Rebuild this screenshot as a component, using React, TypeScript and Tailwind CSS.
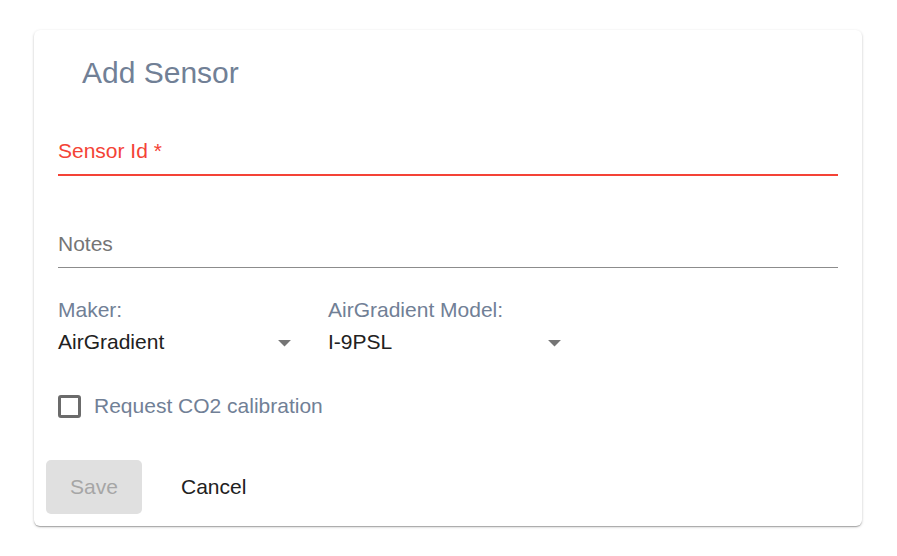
import { useState } from 'react'

function Caret() {
  return (
    <svg width="31" height="31" viewBox="0 0 24 24" className="text-[#757575]">
      <path d="M7 10l5 5 5-5z" fill="currentColor" />
    </svg>
  )
}

function SelectField({ label, value }: { label: string; value: string }) {
  return (
    <div className="w-[240px] mr-[30px]">
      <div className="text-[#718096] leading-[24px] mb-[8px]">{label}</div>
      <div className="flex items-center justify-between h-[24px]">
        <span className="text-[#212121]">{value}</span>
        <span className="mr-[-2px] flex items-center">
          <Caret />
        </span>
      </div>
    </div>
  )
}

export default function App() {
  const [checked, setChecked] = useState(false)

  return (
    <div className="min-h-[556px] bg-white pl-[34px] pt-[30px] font-['Liberation_Sans',Arial,sans-serif] text-[21px]">
      <div className="w-[828px] bg-white rounded-md shadow-[0_1px_3px_rgba(0,0,0,0.2),0_1px_1px_rgba(0,0,0,0.14),0_2px_1px_-1px_rgba(0,0,0,0.12)]">
        {/* Header */}
        <div className="pl-[48px] pt-[25px]">
          <h2 className="text-[30px] leading-[36px] text-[#718096]">Add Sensor</h2>
        </div>

        <div className="px-[24px]">
          {/* Sensor Id */}
          <div className="mt-[44px] h-[41px] border-b-2 border-[#f44336]">
            <span className="leading-[24px] text-[#f44336]">Sensor Id *</span>
          </div>

          {/* Notes */}
          <div className="mt-[52px] h-[40px] border-b border-[#8c8c8c]">
            <span className="leading-[24px] text-[#757575]">Notes</span>
          </div>

          {/* Selects */}
          <div className="flex mt-[30px]">
            <SelectField label="Maker:" value="AirGradient" />
            <SelectField label="AirGradient Model:" value="I-9PSL" />
          </div>

          {/* Checkbox */}
          <label className="mt-[40px] flex items-center h-[24px] cursor-pointer select-none">
            <span
              onClick={() => setChecked(!checked)}
              className="w-[23px] h-[23px] rounded-[3px] border-[3px] border-[#6b6b6b] flex items-center justify-center"
            >
              {checked && <span className="w-[11px] h-[11px] bg-[#6b6b6b]" />}
            </span>
            <span className="ml-[13px] leading-[24px] text-[#718096]">Request CO2 calibration</span>
          </label>
        </div>

        {/* Actions */}
        <div className="flex items-center pl-[12px] pt-[42px] pb-[12px]">
          <button
            disabled
            className="h-[54px] w-[96px] rounded-[5px] bg-[#e0e0e0] text-[#a6a6a6]"
          >
            Save
          </button>
          <button className="h-[54px] ml-[15px] px-[24px] rounded-[5px] text-[#212121]">
            Cancel
          </button>
        </div>
      </div>
    </div>
  )
}
